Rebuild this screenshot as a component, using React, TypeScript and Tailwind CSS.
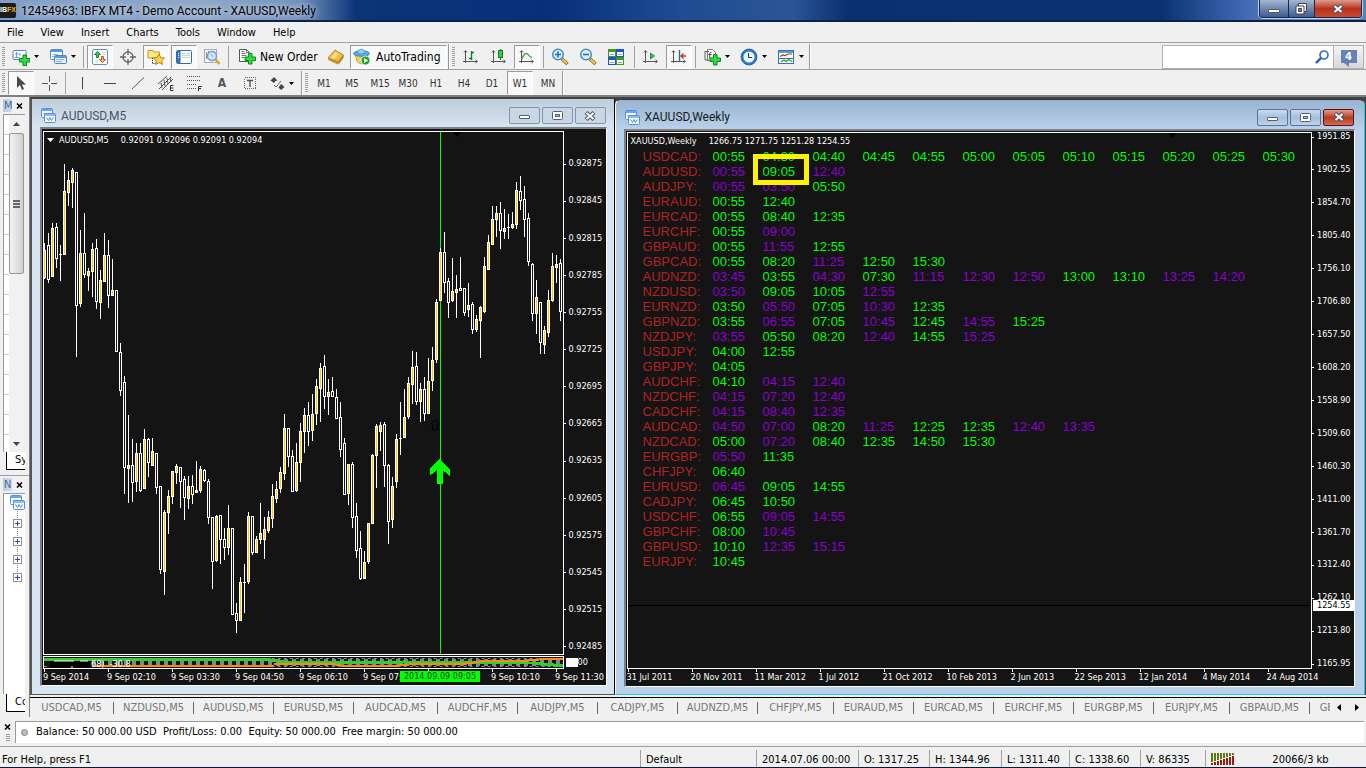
import type { ReactNode } from "react";

type Candle = [number, number, number, number, 0 | 1];

// high, body top, body bottom, low, 1 = bullish
const candles: Candle[] = [
  [243, 250, 277, 278, 1], [233, 245, 279, 282, 0], [223, 228, 276, 276, 1], [223, 227, 258, 267, 0],
  [245, 254, 254, 280, 0], [164, 191, 254, 254, 1], [171, 180, 192, 205, 1], [168, 170, 182, 207, 1],
  [172, 172, 305, 356, 0], [230, 253, 303, 306, 1], [213, 253, 274, 277, 0], [268, 271, 275, 290, 1],
  [243, 249, 271, 296, 1], [239, 248, 301, 308, 0], [270, 280, 302, 318, 1], [233, 255, 281, 281, 1],
  [240, 255, 295, 307, 0], [259, 290, 295, 295, 1], [290, 290, 351, 351, 0], [343, 352, 390, 395, 0],
  [376, 382, 467, 493, 0], [415, 465, 468, 502, 1], [439, 465, 482, 501, 0], [443, 453, 481, 491, 1],
  [443, 453, 490, 491, 0], [429, 439, 488, 488, 1], [438, 439, 462, 476, 0], [438, 451, 465, 465, 1],
  [453, 453, 487, 493, 0], [486, 486, 569, 573, 0], [510, 512, 571, 594, 1], [490, 496, 512, 533, 1],
  [471, 471, 496, 503, 1], [464, 466, 472, 483, 1], [467, 467, 481, 507, 0], [476, 479, 497, 519, 0],
  [476, 486, 498, 508, 1], [475, 486, 494, 503, 0], [461, 490, 492, 492, 1], [466, 469, 490, 492, 1],
  [469, 470, 480, 481, 0], [479, 481, 517, 523, 0], [517, 517, 561, 588, 0], [515, 516, 560, 561, 1],
  [515, 515, 539, 563, 0], [528, 539, 547, 559, 0], [505, 528, 547, 554, 1], [528, 528, 614, 614, 0],
  [603, 613, 620, 632, 0], [577, 582, 620, 620, 1], [564, 582, 582, 612, 0], [512, 516, 581, 583, 1],
  [516, 516, 552, 554, 0], [536, 539, 552, 552, 1], [503, 533, 539, 543, 1], [517, 529, 539, 558, 1],
  [511, 517, 530, 532, 1], [484, 496, 518, 527, 1], [481, 489, 498, 502, 1], [467, 472, 488, 492, 1],
  [414, 428, 473, 479, 1], [428, 428, 456, 466, 0], [450, 456, 491, 491, 0], [443, 462, 490, 491, 1],
  [423, 431, 462, 481, 1], [408, 415, 431, 452, 1], [402, 415, 431, 445, 0], [394, 414, 430, 440, 1],
  [379, 386, 413, 424, 1], [363, 368, 388, 421, 1], [355, 366, 396, 408, 0], [379, 392, 396, 414, 1],
  [377, 391, 396, 396, 0], [389, 397, 418, 418, 0], [402, 417, 449, 456, 0], [438, 443, 494, 494, 0],
  [464, 464, 493, 504, 1], [462, 464, 517, 527, 0], [503, 516, 550, 557, 0], [531, 548, 578, 579, 0],
  [551, 562, 578, 578, 1], [523, 523, 561, 563, 1], [454, 455, 523, 523, 1], [424, 426, 455, 487, 1],
  [422, 425, 431, 450, 1], [422, 424, 465, 486, 0], [464, 465, 521, 543, 0], [477, 486, 519, 527, 1],
  [434, 439, 481, 487, 1], [402, 438, 438, 454, 0], [389, 417, 437, 437, 1], [377, 383, 416, 418, 1],
  [351, 367, 384, 403, 1], [352, 366, 401, 404, 0], [383, 389, 401, 421, 1], [377, 389, 413, 420, 0],
  [358, 381, 413, 413, 1], [347, 360, 380, 390, 1], [299, 302, 359, 362, 1], [248, 252, 300, 300, 1],
  [232, 252, 282, 292, 0], [278, 281, 302, 317, 0], [258, 291, 300, 301, 1], [275, 289, 292, 317, 1],
  [257, 288, 290, 290, 0], [288, 288, 312, 315, 0], [283, 305, 309, 316, 1], [302, 304, 329, 333, 0],
  [315, 319, 329, 331, 1], [306, 307, 320, 357, 1], [257, 266, 311, 312, 1], [235, 242, 269, 269, 1],
  [206, 219, 244, 244, 1], [206, 213, 219, 236, 1], [202, 213, 230, 248, 0], [209, 228, 231, 238, 1],
  [214, 227, 227, 238, 0], [212, 224, 227, 228, 1], [182, 190, 224, 228, 1], [176, 191, 200, 209, 0],
  [186, 199, 219, 236, 0], [213, 218, 261, 265, 0], [263, 264, 313, 320, 0], [280, 297, 313, 333, 1],
  [302, 302, 342, 353, 0], [326, 330, 344, 353, 1], [290, 300, 332, 336, 1], [253, 266, 300, 301, 1],
  [255, 264, 267, 282, 1], [259, 263, 311, 320, 0],
];

// g = long signal, p = short signal
const signals: [string, string][] = [
  ["USDCAD", "g00:55 g04:30 g04:40 g04:45 g04:55 g05:00 g05:05 g05:10 g05:15 g05:20 g05:25 g05:30"],
  ["AUDUSD", "p00:55 g09:05 p12:40"],
  ["AUDJPY", "p00:55 p03:50 g05:50"],
  ["EURAUD", "g00:55 g12:40"],
  ["EURCAD", "g00:55 g08:40 g12:35"],
  ["EURCHF", "g00:55 p09:00"],
  ["GBPAUD", "g00:55 p11:55 g12:55"],
  ["GBPCAD", "g00:55 g08:20 p11:25 g12:50 g15:30"],
  ["AUDNZD", "p03:45 g03:55 p04:30 g07:30 p11:15 p12:30 p12:50 g13:00 g13:10 p13:25 p14:20"],
  ["NZDUSD", "p03:50 g09:05 g10:05 p12:55"],
  ["EURNZD", "g03:50 p05:50 g07:05 p10:30 g12:35"],
  ["GBPNZD", "g03:55 p06:55 g07:05 p10:45 g12:45 p14:55 g15:25"],
  ["NZDJPY", "p03:55 g05:50 g08:20 p12:40 g14:55 p15:25"],
  ["USDJPY", "g04:00 g12:55"],
  ["GBPJPY", "g04:05"],
  ["AUDCHF", "g04:10 p04:15 p12:40"],
  ["NZDCHF", "p04:15 p07:20 p12:40"],
  ["CADCHF", "p04:15 p08:40 p12:35"],
  ["AUDCAD", "p04:50 p07:00 g08:20 p11:25 g12:25 g12:35 p12:40 p13:35"],
  ["NZDCAD", "g05:00 p07:20 g08:40 g12:35 g14:50 g15:30"],
  ["EURGBP", "p05:50 g11:35"],
  ["CHFJPY", "g06:40"],
  ["EURUSD", "p06:45 g09:05 g14:55"],
  ["CADJPY", "g06:45 g10:50"],
  ["USDCHF", "g06:55 p09:05 p14:55"],
  ["GBPCHF", "g08:00 p10:45"],
  ["GBPUSD", "g10:10 p12:35 p15:15"],
  ["EURJPY", "g10:45"],
];

const leftPrices = ["0.92875", "0.92845", "0.92815", "0.92785", "0.92755", "0.92725", "0.92695", "0.92665", "0.92635", "0.92605", "0.92575", "0.92545", "0.92515", "0.92485"];
const rightPrices = ["1951.85", "1902.55", "1854.70", "1805.40", "1756.10", "1706.80", "1657.50", "1608.20", "1558.90", "1509.60", "1460.30", "1411.00", "1361.70", "1312.40", "1262.10", "1213.80", "1165.95"];
const leftDates = ["9 Sep 2014", "9 Sep 02:10", "9 Sep 03:30", "9 Sep 04:50", "9 Sep 06:10", "9 Sep 07:30", "", "9 Sep 10:10", "9 Sep 11:30"];
const rightDates = ["31 Jul 2011", "20 Nov 2011", "11 Mar 2012", "1 Jul 2012", "21 Oct 2012", "10 Feb 2013", "2 Jun 2013", "22 Sep 2013", "12 Jan 2014", "4 May 2014", "24 Aug 2014"];

const tabs: [string, string][] = [
  ["USDCAD,M5", "w-[84px]"], ["NZDUSD,M5", "w-[80px]"], ["AUDUSD,M5", "w-[80px]"], ["EURUSD,M5", "w-[80px]"],
  ["AUDCAD,M5", "w-[84px]"], ["AUDCHF,M5", "w-[80px]"], ["AUDJPY,M5", "w-[80px]"], ["CADJPY,M5", "w-[80px]"],
  ["AUDNZD,M5", "w-[80px]"], ["CHFJPY,M5", "w-[76px]"], ["EURAUD,M5", "w-[80px]"], ["EURCAD,M5", "w-[80px]"],
  ["EURCHF,M5", "w-[80px]"], ["EURGBP,M5", "w-[80px]"], ["EURJPY,M5", "w-[76px]"], ["GBPAUD,M5", "w-[80px]"],
  ["GBPCAD,M5", "w-[80px]"],
];

/* ---------- icons ---------- */

function Svg({ s = 18, children }: { s?: number; children: ReactNode }) {
  return (
    <svg width={s} height={s} viewBox={`0 0 ${s} ${s}`} className="shrink-0" fill="none">
      {children}
    </svg>
  );
}

const Plus = () => (
  <path d="M10.500 5.500h3.500v3.500h3.500v3.500h-3.500v3.500h-3.500v-3.500h-3.500v-3.500h3.500z" fill="#2fdc3c" stroke="#0a8a1c" />
);

const NewChartIcon = () => (
  <Svg>
    <rect x="1" y="2.500" width="13" height="9" rx="1" fill="#fff" stroke="#4a86c0" />
    <path d="M3 6h4M4.500 4v5M8 5v3M2.500 9.500h5" stroke="#6a9bcb" />
    <g transform="translate(.5 1.500)"><Plus /></g>
  </Svg>
);

const ProfilesIcon = () => (
  <Svg>
    <rect x="1.500" y="1.500" width="12" height="10" rx="1" fill="#fff" stroke="#4a86c0" />
    <path d="M2 3h11" stroke="#5d9bd8" strokeWidth="2" />
    <path d="M3 6.500h6M3 8.500h3" stroke="#8fb5dc" />
    <rect x="5.500" y="7.500" width="12" height="8" rx="1" fill="#e8f1fb" stroke="#4a86c0" />
    <path d="M6 9h11" stroke="#5d9bd8" strokeWidth="2" />
    <path d="M7 11.500h8M7 13.500h6" stroke="#8fb5dc" />
  </Svg>
);

const MarketIcon = () => (
  <Svg s={16}>
    <rect x=".5" y=".5" width="15" height="15" rx="1.500" fill="#fff" stroke="#5b93c6" />
    <path d="M10 3.500h4M10 5.500h4M3 11.500h3M3 13.500h3" stroke="#c9d6e4" />
    <path d="M5.500 2.500 2.500 5.500h2v3h2v-3h2z" fill="#35d046" stroke="#158a24" />
    <path d="M10.500 13.500 13.500 10.500h-2v-3h-2v3h-2z" fill="#ffb28e" stroke="#d04a1c" />
  </Svg>
);

const DataWindowIcon = () => (
  <Svg s={16}>
    <circle cx="8" cy="8" r="5" stroke="#666" strokeWidth="1.300" />
    <path d="M8 0v6M8 10v6M0 8h6M10 8h6" stroke="#666" strokeWidth="1.300" />
  </Svg>
);

const NavigatorIcon = () => (
  <Svg>
    <path d="M1 2.500h5l1 1.500h5.500v6H1z" fill="#ffe680" stroke="#c49a1a" />
    <path d="M5.500 10v6M5.500 15.500h5" stroke="#333" strokeDasharray="1 1" />
    <path d="m12 6 1.700 3.500 3.800.5-2.800 2.600.7 3.900-3.400-1.900-3.400 1.900.7-3.900L6.500 10l3.800-.5z" fill="#ffd34a" stroke="#b9860f" />
  </Svg>
);

const TerminalIcon = () => (
  <Svg s={16}>
    <rect x=".5" y="1.500" width="15" height="13" rx="1" fill="#fff" stroke="#2e6dab" />
    <rect x="1" y="2" width="3.500" height="12" fill="#3a6fb4" />
    <path d="M6 4.500h8M6 6.500h8M6 8.500h8" stroke="#c3d5ea" />
    <path d="M2 4.500h1M2 6.500h1M2 8.500h1" stroke="#fff" />
  </Svg>
);

const TesterIcon = () => (
  <Svg>
    <rect x="1.500" y="1.500" width="12" height="13" fill="#f4f4f4" stroke="#aaa" />
    <path d="M3.500 4v7M11 3v4M5.500 3v3" stroke="#888" />
    <circle cx="9" cy="8" r="4.500" fill="#cfe8fb" stroke="#6f9fce" strokeWidth="1.400" />
    <path d="m12.500 11.500 4 4.500" stroke="#d7a52b" strokeWidth="2.600" />
    <path d="m8 6 2 3" stroke="#7fa8cc" />
  </Svg>
);

const SheetPlusIcon = () => (
  <Svg>
    <path d="M1.500 1.500h7l3 3v9h-10z" fill="#fff" stroke="#555" />
    <path d="M8.500 1.500v3h3M3.500 5.500h4M3.500 7.500h5M3.500 9.500h3M3.500 3.500h3" stroke="#777" />
    <Plus />
  </Svg>
);

const IndicatorIcon = () => (
  <Svg>
    <path d="M4.500 1.500h5l3 3v8h-8z" fill="#fff" stroke="#777" />
    <path d="M2 3.500h4M2 3v9M2 12h4" stroke="#666" />
    <path d="M8.500 4c-2 0-1.500 2-2 6M5.500 6.500h3" stroke="#333" />
    <g transform="translate(0 1)"><Plus /></g>
  </Svg>
);

const GoldIcon = () => (
  <Svg>
    <path d="M1 10 8 2l8.500 5-5 7z" fill="#f0bf3a" stroke="#a8731a" strokeWidth=".8" />
    <path d="m1 10 .5 2 9.500 4.500.5-2.500z" fill="#c88a1d" />
    <path d="m11.500 14 5-7v2.500l-5 7z" fill="#a86f15" />
    <path d="m4 9.500 5-5.500 3 1.700-5 5.300z" fill="#fbe08c" />
  </Svg>
);

const ExpertIcon = () => (
  <Svg>
    <path d="M2 6h13l-2 8c-3 3-7 2-9-1z" fill="#f6d25c" stroke="#c08e1e" strokeWidth=".8" />
    <ellipse cx="8.500" cy="5.500" rx="8" ry="2.800" fill="#56aee6" stroke="#2779b3" strokeWidth=".8" />
    <path d="M4.500 5c0-5 7.500-5 7.500 0-2 1.200-5.500 1.200-7.500 0z" fill="#8fd0f6" stroke="#2779b3" strokeWidth=".6" />
    <circle cx="12.500" cy="12.500" r="4.500" fill="#21a52c" stroke="#fff" strokeWidth=".8" />
    <path d="m11.200 10 3.800 2.500-3.800 2.500z" fill="#fff" />
  </Svg>
);

const Axes = () => <path d="M3.500 3v12M1 13.500h14M2 4.500l1.500-2L5 4.500M13.500 12l2 1.500-2 1.500" stroke="#555" />;

const BarChartIcon = () => (
  <Svg><Axes /><path d="M9.500 3v9M7 10.500h2.500M9.500 4.500H12" stroke="#13801f" strokeWidth="1.400" /></Svg>
);
const CandleChartIcon = () => (
  <Svg><Axes /><path d="M10.500 1v11" stroke="#13801f" /><rect x="8.500" y="2.500" width="4" height="7" fill="#2fce3e" stroke="#13801f" /></Svg>
);
const LineChartIcon = () => (
  <Svg><Axes /><path d="M4 11c1-3 3-5.500 4.500-5.500S11 9 14 9.500" stroke="#3fa84a" strokeWidth="1.300" /></Svg>
);

const ZoomIcon = ({ plus = false }: { plus?: boolean }) => (
  <Svg>
    <path d="m11 11 5.500 5" stroke="#8c6914" strokeWidth="3.600" />
    <path d="m11.500 11.500 4.500 4" stroke="#f3cf4c" strokeWidth="2" />
    <circle cx="7" cy="6.500" r="5.300" fill="#d4effc" stroke="#4b8cc4" strokeWidth="1.500" />
    <path d={plus ? "M4 6.500h6M7 3.500v6" : "M4 6.500h6"} stroke="#2e6ea8" strokeWidth="1.600" />
  </Svg>
);

const TileIcon = () => (
  <Svg s={16}>
    <rect width="8" height="8" fill="#3f9a1c" /><rect x="8" width="8" height="8" fill="#2450c8" />
    <rect y="8" width="8" height="8" fill="#2450c8" /><rect x="8" y="8" width="8" height="8" fill="#3f9a1c" />
    <path d="M1 3h6v4H1zM9 3h6v4H9zM1 11h6v4H1zM9 11h6v4H9z" fill="#eef4ff" />
    <path d="M2 5.500h4M10 5.500h4M2 13.500h4M10 13.500h4" stroke="#9ab" />
  </Svg>
);

const AutoScrollIcon = () => (
  <Svg><Axes /><path d="M8.500 5v6l4-3z" fill="#34c943" stroke="#13801f" strokeWidth=".8" /></Svg>
);
const ShiftIcon = () => (
  <Svg><Axes /><path d="M9.500 2v11" stroke="#1b6fae" strokeWidth="1.400" /><path d="M10.500 8H16M13.500 5.500 11 8l2.500 2.500" stroke="#c23a10" strokeWidth="1.400" /></Svg>
);

const ClockIcon = () => (
  <Svg>
    <circle cx="9" cy="9" r="6.800" fill="#eaf5fd" stroke="#2b79c9" strokeWidth="2.400" />
    <circle cx="9" cy="9" r="8" stroke="#1b4f8f" strokeWidth=".7" />
    <path d="M8.500 5v4.500H12" stroke="#333" />
  </Svg>
);

const TemplateIcon = () => (
  <Svg>
    <rect x="1.500" y="2.500" width="15" height="13" fill="#fff" stroke="#3572ae" />
    <path d="M2 4h14" stroke="#5d9bd8" strokeWidth="2" />
    <path d="M1 10.500h16" stroke="#3572ae" />
    <path d="m3 8.500 3-1.500 2 .5 3-1.500h4" stroke="#b3311a" strokeWidth="1.200" />
    <path d="m4 14 3-2 2 1.500 3-2 3 2" stroke="#2a9a35" strokeWidth="1.200" />
  </Svg>
);

const CursorIcon = () => <Svg s={16}><path d="M4 1v12l3-3 2 5 2-1-2-4.500h4z" fill="#4a4a4a" /></Svg>;
const CrossIcon = () => <Svg s={16}><path d="M8.500 1v6M8.500 10v6M1 8.500h6M10 8.500h6" stroke="#555" /></Svg>;
const VLineIcon = () => <Svg s={16}><path d="M8.500 2v12" stroke="#444" /></Svg>;
const HLineIcon = () => <Svg s={16}><path d="M2 8.500h12" stroke="#444" /></Svg>;
const TrendIcon = () => <Svg s={16}><path d="M2 14 14 2.500" stroke="#555" /></Svg>;
const ChannelIcon = () => (
  <Svg s={16}>
    <path d="M1 14 13 2M4 15 15 4M0 9l9-8M3 8l1 5M6 5l1 6M9 3l1 6M12 3l1 4" stroke="#555" />
    <path d="M15.500 10.500H12.500v5h3M12.500 13h3" stroke="#333" />
  </Svg>
);
const FiboIcon = () => (
  <Svg s={16}>
    <path d="M1 1.500h14M1 5.500h14M1 9.500h10M1 13.500h9" stroke="#555" strokeDasharray="1 1" />
    <path d="M12.500 16v-4.500H16M12.500 13.500H15" stroke="#333" />
  </Svg>
);
const LabelIcon = () => (
  <Svg s={16}>
    <rect x="2.500" y="2.500" width="11" height="11" stroke="#666" strokeDasharray="1 1" shapeRendering="crispEdges" />
    <path d="M5 5.500h6M8 5.500V12" stroke="#555" strokeWidth="1.400" />
  </Svg>
);
const ArrowsIcon = () => (
  <Svg s={16}>
    <path d="m5 2 3.500 3.500-2 .5L5 8 1.500 5.500z" fill="#444" />
    <path d="m12 9 3.500 3-3.500 3-2.500-2.500z" fill="#444" />
    <path d="m5 10 2 2 5-6" stroke="#666" />
  </Svg>
);

function ChartIcon() {
  return (
    <Svg s={15}>
      <rect x=".5" y=".5" width="11" height="9" rx="1" fill="#fff" stroke="#4d8fe6" />
      <path d="M1 2h10" stroke="#68a6ef" strokeWidth="2" />
      <path d="M2.500 5.500h2M6 5.500h1.500" stroke="#4d8fe6" />
      <rect x="3.500" y="5.500" width="11" height="9" rx="1" fill="#f6faff" stroke="#4d8fe6" />
      <path d="M4 7h10" stroke="#68a6ef" strokeWidth="1.500" />
      <path d="m5.500 9.500 2 3 1.500-3 1.500 3 2-3" stroke="#4d8fe6" />
    </Svg>
  );
}

/* ---------- toolbar parts ---------- */

function ToolButton({ label, on, children }: { label: string; on?: boolean; children: ReactNode }) {
  return (
    <div className="flex w-7 shrink-0 justify-center">
      <button
        aria-label={label}
        className={`flex h-6 w-[26px] items-center justify-center border text-[10px] text-[#333] ${
          on ? "border-t-[#999] border-l-[#999] border-r-white border-b-white bg-[#f8f8f8]" : "border-transparent"
        }`}
      >
        {children}
      </button>
    </div>
  );
}

function DropButton({ label, children }: { label: string; children: ReactNode }) {
  return (
    <button aria-label={label} className="flex h-6 w-[37px] shrink-0 items-center gap-1 pl-[5px]">
      {children}
      <Caret />
    </button>
  );
}

const Caret = () => (
  <svg width="5" height="3" className="shrink-0"><path d="M0 0h5L2.500 3z" fill="#000" /></svg>
);

const Grip = () => (
  <span className="mx-[2px] h-5 w-[3px] shrink-0 bg-[repeating-linear-gradient(#a0a0a0_0_1px,#f0f0f0_1px_2px)]" />
);
const Sep = () => <span className="mx-[2px] h-[22px] w-px shrink-0 bg-[#a0a0a0]" />;
const ToolEnd = () => <span className="h-full w-[2px] shrink-0 border-l border-[#999] bg-white" />;

/* ---------- chart windows ---------- */

function WindowButtons({ active }: { active: boolean }) {
  const base = active
    ? "border-[#5c7390] bg-linear-to-b from-[#cbdcee] via-[#a5bfdc] to-[#bcd3ea]"
    : "border-[#8095b0] bg-[#c9d6e4]";
  const close = active
    ? "border-[#5a1418] bg-linear-to-b from-[#e29a8c] via-[#b73a24] to-[#d5684e]"
    : base;
  return (
    <div className="flex gap-[2px]">
      <button aria-label="Minimize" className={`flex h-[17px] w-[31px] items-center justify-center rounded-xs border ${base}`}>
        <span className="mt-[3px] h-1 w-[11px] rounded-[1px] border border-[#55607a] bg-white" />
      </button>
      <button aria-label="Maximize" className={`flex h-[17px] w-[31px] items-center justify-center rounded-xs border ${base}`}>
        <svg width="11" height="9"><rect x=".5" y=".5" width="10" height="8" rx="1" fill="#fff" stroke="#55607a" /><rect x="3.500" y="3.500" width="4" height="2" fill="#a9bdd3" stroke="#55607a" /></svg>
      </button>
      <button aria-label="Close" className={`flex h-[17px] w-[31px] items-center justify-center rounded-xs border ${close}`}>
        <CloseGlyph />
      </button>
    </div>
  );
}

const CloseGlyph = () => (
  <svg width="12" height="10">
    <path d="m2 1.500 8 7M10 1.500l-8 7" stroke="#4c5468" strokeWidth="4" />
    <path d="m2.500 2 7 6M9.500 2l-7 6" stroke="#fff" strokeWidth="2" />
  </svg>
);

function DateAxis({ dates, children }: { dates: string[]; children?: ReactNode }) {
  return (
    <div className="relative flex overflow-hidden">
      {dates.map((d, i) => (
        <div key={i} className="w-16 shrink-0 whitespace-nowrap">
          <div className="ml-px h-[3px] w-px bg-white" />
          <div className="leading-[11px]">{d}</div>
        </div>
      ))}
      {children}
    </div>
  );
}

function CandlePlot() {
  return (
    <svg viewBox="44 132 519 522" preserveAspectRatio="none" className="absolute inset-0 h-full w-full" shapeRendering="crispEdges">
      <rect x="440" y="132" width="1" height="522" fill="#0f0" />
      {candles.map(([hi, top, bottom, lo, up], i) => {
        const x = 44 + i * 4;
        return (
          <g key={i}>
            <rect x={x} y={hi} width="1" height={lo - hi + 1} fill="#fff" />
            <rect x={x - 1} y={top} width="3" height={bottom - top + 1} fill="#fff" />
            {bottom - top > 1 && (
              <rect x={x} y={top + 1} width="1" height={bottom - top - 1} fill={up ? "#ffc800" : "#141414"} />
            )}
          </g>
        );
      })}
      <path d="M453 132h9l-4.500 5z" fill="#000" />
      <path d="M431 424l4.500-4 4.500 4h-2v6h-5v-6z" fill="none" stroke="#000" />
      <path d="M440 459l10 10v7l-7-6v14h-6v-14l-7 6v-7z" fill="#0f0" />
    </svg>
  );
}

function IndicatorStrip() {
  return (
    <svg viewBox="0 0 519 11" preserveAspectRatio="none" className="block h-full w-full" shapeRendering="crispEdges">
      <path d="M0 1.500h519M0 9.500h519" stroke="#778899" strokeDasharray="3 3" />
      <path d="M48 5.500h471" stroke="#778899" strokeWidth="7" strokeDasharray="4 4" />
      <path d="M0 2h220l20 3h40l20 1 60-1 80 1h50l20 2h9" stroke="#32cd32" strokeWidth="3" fill="none" />
      <path d="M48 9h182M230 7h60l10 2h50l20-2h50l20-3h40l20-2h50l20 2h13" stroke="#ff8c00" strokeWidth="2" fill="none" />
      <path d="M6 4h40v7H6z" fill="#000" />
      <path d="M10 4h20M36 4h8M27 10h2" stroke="#fff" />
    </svg>
  );
}

function AudWindow() {
  return (
    <section className="flex min-w-0 flex-[567] flex-col border-r border-b border-l-2 border-r-black border-b-[#555] border-l-[#555] bg-[#d7e4f2] pr-[7px] pb-2 pl-2">
      <header className="-mr-[7px] -ml-2 flex h-7 shrink-0 items-center gap-[5px] bg-linear-to-b from-[#bfcddb] to-[#d7e4f2] pt-[5px] pr-2 pl-[9px] text-[12px] text-[#4b545e]">
        <ChartIcon />
        <h2 className="mr-auto">AUDUSD,M5</h2>
        <WindowButtons active={false} />
      </header>
      <div className="flex min-h-0 flex-1 flex-col border-t-2 border-r border-b border-l-2 border-t-[#808080] border-r-white border-b-white border-l-[#808080] bg-[#141414] pt-[2px] pl-px font-['DejaVu_Sans_Condensed','DejaVu_Sans',sans-serif] text-[9px] text-white">
        <div className="flex min-h-0 flex-1">
          <div className="relative flex-1 border border-white">
            <CandlePlot />
            <p className="relative flex items-center pt-px pl-[3px] leading-[14px]">
              <svg width="7" height="4"><path d="M0 0h7L3.500 4z" fill="#fff" /></svg>
              <span className="mr-3 ml-[5px]">AUDUSD,M5</span>
              <span>0.92091 0.92096 0.92091 0.92094</span>
            </p>
          </div>
          <div className="flex w-[42px] shrink-0 flex-col justify-between pt-[27px] pb-[2px]">
            {leftPrices.map((p) => (
              <div key={p} className="flex h-3 items-center gap-[3px]"><i className="h-px w-[2px] bg-white" />{p}</div>
            ))}
          </div>
        </div>
        <div className="mt-px flex h-[13px] shrink-0">
          <div className="relative flex-1 overflow-hidden border border-white">
            <IndicatorStrip />
            <span className="absolute top-[2px] left-[47px] leading-[10px]">68)&nbsp; -30.8</span>
          </div>
          <div className="flex w-[42px] items-center pl-[2px]"><i className="h-[9px] w-3 bg-white" />00</div>
        </div>
        <div className="h-4 shrink-0">
          <DateAxis dates={leftDates}>
            <span className="absolute top-[2px] left-[357px] h-[11px] w-20 bg-[#0f0] text-center leading-[11px] text-[#333]">2014.09.09 09:05</span>
          </DateAxis>
        </div>
      </div>
    </section>
  );
}

function XauWindow() {
  return (
    <section className="flex min-w-0 flex-[732] flex-col rounded-t-md border border-t-[#333] border-r-[#22c8e8] border-b-[#22c8e8] border-l-white bg-[#b9d1ea] pr-[9px] pb-[7px] pl-2">
      <header className="-mr-[9px] -ml-2 flex h-[29px] shrink-0 items-center gap-[5px] rounded-t-md bg-linear-to-b from-[#99b4d1] to-[#b9d1ea] pt-[5px] pr-[10px] pl-[9px] text-[12px] text-[#1a1a1a]">
        <ChartIcon />
        <h2 className="mr-auto">XAUUSD,Weekly</h2>
        <WindowButtons active />
      </header>
      <div className="flex min-h-0 flex-1 flex-col border-t-2 border-r border-b border-l-2 border-t-[#808080] border-r-white border-b-white border-l-[#808080] bg-[#141414] pt-px pl-px font-['DejaVu_Sans_Condensed','DejaVu_Sans',sans-serif] text-[9px] text-white">
        <div className="relative flex min-h-0 flex-1">
          <div className="relative flex-1 overflow-hidden border border-white">
            <p className="flex gap-3 pt-px pb-px pl-[3px] leading-[14px]">
              <span>XAUUSD,Weekly</span>
              <span>1266.75 1271.75 1251.28 1254.55</span>
            </p>
            <table className="ml-[15px] table-fixed border-collapse font-['Liberation_Sans',Arial,sans-serif] text-[13px] leading-[15px]">
              <tbody>
                {signals.map(([pair, times]) => (
                  <tr key={pair} className="h-[15px]">
                    <th scope="row" className="w-[70px] min-w-[70px] p-0 text-left font-normal text-[#b22222]">{pair}:</th>
                    {times.split(" ").map((t, i) => (
                      <td key={i} className={`w-[50px] min-w-[50px] p-0 ${t[0] === "g" ? "text-[#00ff00]" : "text-[#8a00d0]"}`}>{t.slice(1)}</td>
                    ))}
                  </tr>
                ))}
              </tbody>
            </table>
            <div className="absolute top-[21px] left-[125px] h-[31px] w-14 border-[5px] border-[#fff200]" />
            <svg width="9" height="5" className="absolute top-0 right-[134px]"><path d="M0 0h9L4.500 5z" fill="#000" /></svg>
          </div>
          <div className="flex w-[42px] shrink-0 flex-col justify-between">
            {rightPrices.map((p) => (
              <div key={p} className="flex h-[10px] items-center gap-[3px]"><i className="h-px w-[2px] bg-white" />{p}</div>
            ))}
          </div>
          <div className="absolute top-[88%] right-0 left-px flex h-px items-center">
            <span className="h-px flex-1 bg-black" />
            <span className="ml-[3px] h-[11px] w-[41px] bg-white pl-1 leading-[11px] text-black">1254.55</span>
          </div>
        </div>
        <div className="h-[17px] shrink-0"><DateAxis dates={rightDates} /></div>
      </div>
    </section>
  );
}

/* ---------- docked panels ---------- */

function PanelHeader({ letter }: { letter: string }) {
  return (
    <div className="flex h-[17px] shrink-0 items-center gap-1 pl-[3px]">
      <span className="h-[13px] w-[9px] overflow-hidden bg-linear-to-r from-[#b7cbe0] to-[#cfdeee] pl-px text-[11px] leading-[13px] text-[#4b6a8e]">{letter}</span>
      <button aria-label="Close panel"><MiniClose /></button>
    </div>
  );
}

const MiniClose = () => <svg width="7" height="6"><path d="m1 .5 5 5M6 .5l-5 5" stroke="#000" strokeWidth="1.500" /></svg>;

function PanelTab({ text }: { text: string }) {
  return (
    <div className="ml-[6px] h-[18px] w-[19px] shrink-0 overflow-hidden border-b border-l border-black bg-white pl-2 text-[11px] leading-4">{text}</div>
  );
}

function SidePanels() {
  return (
    <aside className="flex w-[30px] shrink-0 flex-col border-r border-[#808080] bg-[#f0f0f0]">
      <div className="flex h-[379px] shrink-0 flex-col border-b border-[#a0a0a0]">
        <PanelHeader letter="M" />
        <div className="mr-1 ml-[3px] flex flex-1 border-t border-l border-[#999]">
          <div className="w-[5px] bg-[repeating-linear-gradient(#fff_0_19px,#ccc_19px_20px)]" />
          <div className="flex w-[15px] flex-col items-center bg-[#f1f1f1]">
            <svg width="7" height="18"><path d="M0 11h7L3.500 7z" fill="#444" /></svg>
            <div className="flex h-[141px] w-[15px] flex-col items-center justify-center gap-px rounded-xs border border-[#979797] bg-linear-to-r from-[#f4f4f4] to-[#cfcfcf]">
              <i className="h-[2px] w-[7px] bg-[#666]" /><i className="h-[2px] w-[7px] bg-[#666]" /><i className="h-[2px] w-[7px] bg-[#666]" />
            </div>
            <svg width="7" height="18" className="mt-auto"><path d="M0 8h7l-3.500 4z" fill="#444" /></svg>
          </div>
        </div>
        <PanelTab text="Symbols" />
        <div className="h-[5px]" />
      </div>
      <div className="flex min-h-0 flex-1 flex-col">
        <PanelHeader letter="N" />
        <div className="mr-1 ml-[3px] flex flex-1 flex-col gap-[9px] border-t border-l border-[#999] bg-white pt-px pl-[6px]">
          <ChartIcon />
          {[0, 1, 2, 3].map((n) => (
            <svg key={n} width="12" height="9" className="ml-[3px] overflow-visible">
              <path d="M4.500-8v8" stroke="#888" strokeDasharray="1 1" />
              <rect x=".5" y=".5" width="8" height="8" fill="#fff" stroke="#919191" />
              <path d="M2 4.500h5M4.500 2v5" stroke="#2b4a9b" />
            </svg>
          ))}
        </div>
        <PanelTab text="Common" />
        <div className="h-[5px] shrink-0" />
      </div>
    </aside>
  );
}

function Toolbars() {
  const frames = ["M1", "M5", "M15", "M30", "H1", "H4", "D1", "W1", "MN"];
  return (
    <div className="border-b-2 border-[#808080]">
      <div className="flex h-[27px] items-center border-b border-[#a0a0a0] pt-px">
        <Grip />
        <DropButton label="New chart"><NewChartIcon /></DropButton>
        <DropButton label="Profiles"><ProfilesIcon /></DropButton>
        <Sep />
        <ToolButton label="Market Watch" on><MarketIcon /></ToolButton>
        <ToolButton label="Data Window"><DataWindowIcon /></ToolButton>
        <ToolButton label="Navigator" on><NavigatorIcon /></ToolButton>
        <ToolButton label="Terminal" on><TerminalIcon /></ToolButton>
        <ToolButton label="Strategy Tester"><TesterIcon /></ToolButton>
        <Sep />
        <button className="flex h-6 w-[91px] shrink-0 items-center gap-1 pl-[7px] text-[12px] whitespace-nowrap"><SheetPlusIcon />New Order</button>
        <ToolButton label="MetaEditor"><GoldIcon /></ToolButton>
        <button className="flex h-6 w-[97px] shrink-0 items-center gap-[5px] border border-t-[#999] border-r-white border-b-white border-l-[#999] bg-[#f8f8f8] pl-[2px] text-[12px] whitespace-nowrap"><ExpertIcon />AutoTrading</button>
        <span className="w-px" /><ToolEnd />
        <Grip />
        <ToolButton label="Bar Chart"><BarChartIcon /></ToolButton>
        <ToolButton label="Candlesticks"><CandleChartIcon /></ToolButton>
        <ToolButton label="Line Chart" on><LineChartIcon /></ToolButton>
        <Sep />
        <ToolButton label="Zoom In"><ZoomIcon plus /></ToolButton>
        <ToolButton label="Zoom Out"><ZoomIcon /></ToolButton>
        <ToolButton label="Tile Windows"><TileIcon /></ToolButton>
        <span className="w-[2px]" /><Sep />
        <ToolButton label="Auto Scroll"><AutoScrollIcon /></ToolButton>
        <ToolButton label="Chart Shift" on><ShiftIcon /></ToolButton>
        <Sep />
        <DropButton label="Indicators"><IndicatorIcon /></DropButton>
        <DropButton label="Periods"><ClockIcon /></DropButton>
        <DropButton label="Templates"><TemplateIcon /></DropButton>
        <ToolEnd />
        <div className="mr-[2px] ml-auto flex h-6 w-[202px] border border-[#b0b0b0] bg-white">
          <input aria-label="Search" className="min-w-0 flex-1 px-1 outline-none" />
          <svg width="18" height="22"><circle cx="9" cy="9" r="4" fill="none" stroke="#3b6fd0" strokeWidth="1.700" /><path d="m6 12-5 5" stroke="#2458c0" strokeWidth="2.400" /></svg>
          <button aria-label="Messages" className="flex w-[30px] justify-center border-l border-[#b0b0b0] bg-linear-to-b from-[#f4f4f4] to-[#d8d8d8] pt-1">
            <span className="relative h-[13px] w-4 bg-[#6482b4] text-[11px] leading-[13px] font-bold text-white">4
              <svg width="5" height="4" className="absolute top-[13px] left-[3px]"><path d="M0 0h5v4z" fill="#6482b4" /></svg>
            </span>
          </button>
        </div>
      </div>
      <div className="flex h-[25px] items-center pt-px">
        <Grip />
        <ToolButton label="Cursor" on><CursorIcon /></ToolButton>
        <ToolButton label="Crosshair"><CrossIcon /></ToolButton>
        <Sep />
        <ToolButton label="Vertical Line"><VLineIcon /></ToolButton>
        <ToolButton label="Horizontal Line"><HLineIcon /></ToolButton>
        <ToolButton label="Trendline"><TrendIcon /></ToolButton>
        <ToolButton label="Equidistant Channel"><ChannelIcon /></ToolButton>
        <ToolButton label="Fibonacci Retracement"><FiboIcon /></ToolButton>
        <ToolButton label="Text"><b className="text-[12px] text-[#555]">A</b></ToolButton>
        <ToolButton label="Text Label"><LabelIcon /></ToolButton>
        <DropButton label="Arrows"><ArrowsIcon /></DropButton>
        <ToolEnd />
        <Grip />
        {frames.map((f) => <ToolButton key={f} label={f} on={f === "W1"}>{f}</ToolButton>)}
        <ToolEnd />
      </div>
    </div>
  );
}

function StatusBar() {
  const cells: [string, string][] = [
    ["Default", "w-[116px]"], ["2014.07.06 00:00", "w-[102px]"], ["O: 1317.25", "w-[71px]"], ["H: 1344.96", "w-[72px]"],
    ["L: 1311.40", "w-[68px]"], ["C: 1338.60", "w-[71px]"], ["V: 86335", "w-[65px]"],
  ];
  return (
    <footer className="flex h-[21px] shrink-0 border-b border-[#0b1a33] whitespace-nowrap">
      <span className="flex-1 pt-[5px] pl-[2px]">For Help, press F1</span>
      {cells.map(([text, width]) => (
        <span key={text} className={`mt-[3px] shrink-0 border-l border-[#a0a0a0] pt-[2px] pl-[5px] ${width}`}>{text}</span>
      ))}
      <span className="mt-[3px] flex w-[161px] shrink-0 border-l border-[#a0a0a0] pt-[2px] pl-[5px]">
        <svg width="24" height="13" shapeRendering="crispEdges">
          {[0, 1, 2, 3, 4, 5, 6, 7].map((n) => (
            <g key={n}>
              <rect x={n * 3} y="1" width="2" height={9 - n} fill="#5a7a10" />
              <rect x={n * 3} y={11 - n} width="2" height={n + 2} fill="#9c1c10" />
            </g>
          ))}
        </svg>
        <span className="flex-1 text-center">20066/3 kb</span>
      </span>
    </footer>
  );
}

export default function App() {
  return (
    <div className="flex h-screen flex-col overflow-hidden bg-[#f0f0f0] font-['DejaVu_Sans_Condensed','DejaVu_Sans',sans-serif] text-[11px] text-black">
      <header className="flex h-[22px] shrink-0 items-center border-b-2 border-b-[#0b1f47] bg-[linear-gradient(90deg,#7f9dc4_0,#8fa8c9_15%,#7391bd_22%,#0c3578_26%,#06307a_40%,#1f4c92_50%,#2b5597_58%,#0a3070_62%,#0a3272_85%,#3f69b4_91%,#6c8fc4_96%,#5a80b8_100%)]">
        <span className="flex h-[15px] w-4 items-center rounded-r-xs bg-[#1c1c1c] font-['Liberation_Sans',sans-serif] text-[7px] font-bold text-white">IB<span className="text-[#f5b800]">FX</span></span>
        <h1 className="mr-auto ml-[5px] pt-[2px] font-['Roboto',sans-serif] text-[12px] [text-shadow:0_0_6px_#fff]">12454963: IBFX MT4 - Demo Account - XAUUSD,Weekly</h1>
        <div className="mr-1 flex h-[18px] self-start overflow-hidden rounded-b-sm border border-t-0 border-[#1b2a44] ring-1 ring-[#b9cbe6]">
          <button aria-label="Minimize" className="flex w-[29px] items-center justify-center border-r border-[#1b2a44] bg-linear-to-b from-[#a5b7d2] to-[#3d5c8f]"><span className="mt-1 h-1 w-3 rounded-[1px] border border-[#555] bg-white" /></button>
          <button aria-label="Restore" className="flex w-[26px] items-center justify-center border-r border-[#1b2a44] bg-linear-to-b from-[#a5b7d2] to-[#3d5c8f]">
            <svg width="13" height="12"><path d="M3.500.5h8v8h-8z" fill="#fff" stroke="#444" /><path d="M1 3h8v8H1z" fill="#fff" stroke="#444" /><path d="M3.500 5.500h3v3h-3z" fill="#6d86ae" stroke="#444" /></svg>
          </button>
          <button aria-label="Close" className="flex w-[46px] items-center justify-center bg-linear-to-b from-[#dc9b8c] via-[#b8311c] to-[#c9492f]"><CloseGlyph /></button>
        </div>
      </header>

      <nav className="flex h-[21px] shrink-0 items-center gap-[17px] border-b border-[#a0a0a0] pt-[2px] pl-[7px]">
        {["File", "View", "Insert", "Charts", "Tools", "Window", "Help"].map((m) => <button key={m}>{m}</button>)}
      </nav>

      <Toolbars />

      <main className="flex min-h-0 flex-1">
        <SidePanels />
        <div className="flex min-w-0 flex-1 flex-col">
          <div className="flex min-h-0 flex-1 bg-[#444] pt-[2px] pr-px font-['Roboto',sans-serif]">
            <AudWindow />
            <XauWindow />
          </div>
          <div className="mt-[2px] flex h-5 shrink-0 items-center border-t border-black">
            <div className="flex min-w-0 flex-1 overflow-hidden">
              {tabs.map(([name, width]) => (
                <button key={name} className={`h-3 shrink-0 border-r border-[#666] leading-3 text-[#777] ${width}`}>{name}</button>
              ))}
            </div>
            <button aria-label="Scroll left" className="w-[18px] shrink-0"><svg width="4" height="7" className="mx-auto"><path d="M4 0v7L0 3.500z" /></svg></button>
            <button aria-label="Scroll right" className="w-[18px] shrink-0"><svg width="4" height="7" className="mx-auto"><path d="M0 0v7l4-3.500z" /></svg></button>
          </div>
        </div>
      </main>

      <section className="flex h-[30px] shrink-0 border-b border-[#a0a0a0] pt-1 pr-[2px] pb-[3px]">
        <div className="flex w-[15px] flex-col items-center gap-1 pt-[3px]">
          <button aria-label="Close terminal"><MiniClose /></button>
          <span className="h-[7px] w-1 bg-[repeating-linear-gradient(#a0a0a0_0_1px,#f0f0f0_1px_2px)]" />
        </div>
        <div className="flex flex-1 items-center border-t border-l border-[#999] bg-white pl-[5px]">
          <span className="mr-1 h-[7px] w-[7px] rounded-full border border-[#888] bg-[#bbb]" />
          <p className="pl-1 whitespace-pre">Balance: 50 000.00 USD  Profit/Loss: 0.00  Equity: 50 000.00  Free margin: 50 000.00</p>
        </div>
      </section>

      <StatusBar />
    </div>
  );
}
